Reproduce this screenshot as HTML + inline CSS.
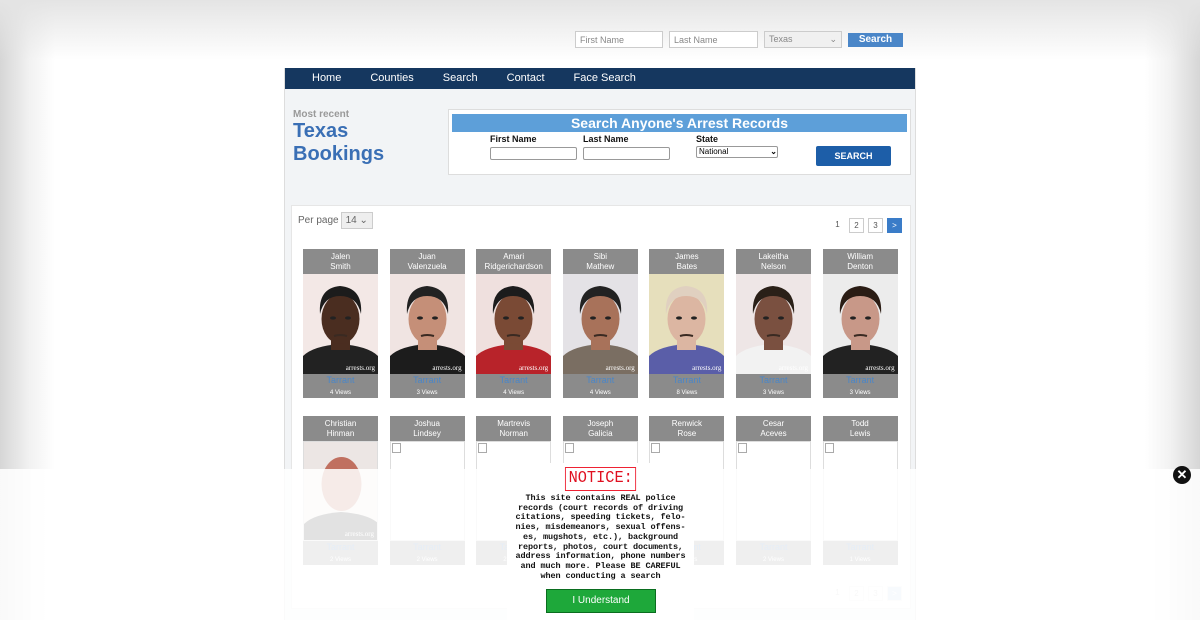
<!DOCTYPE html>
<html><head><meta charset="utf-8"><style>
*{box-sizing:border-box;margin:0;padding:0}
html,body{width:1200px;height:620px;overflow:hidden}
body{position:relative;font-family:"Liberation Sans",Arial,sans-serif;background:linear-gradient(to right,#d6d6d6 0,#f2f2f2 30px,#fff 55px,#fff 1145px,#f2f2f2 1170px,#d6d6d6 1200px)}
.topg{position:absolute;left:0;top:0;width:1200px;height:60px;background:linear-gradient(#e4e4e4,rgba(255,255,255,0))}
.topbar{position:absolute;top:31px;left:575px;display:flex;gap:6px}
.topbar input,.topbar .sel{height:17px;border:1px solid #ccc;background:#fff;font-size:9px;color:#888;padding:2px 4px;font-family:inherit}
.btn1{position:absolute;left:848px;top:33px;width:55px;height:14px;background:#4a86c8;color:#fff;font-size:10px;font-weight:bold;text-align:center;line-height:14px}
.wrap{position:absolute;left:284px;top:68px;width:632px;height:552px;background:#f2f4f6;border-left:1px solid #ddd;border-right:1px solid #ddd}
.nav{height:21px;background:#15375f;display:flex;padding-left:27px}
.nav span{color:#fff;font-size:11px;line-height:21px;margin-right:29px}
.mr{position:absolute;left:8px;top:41px;color:#999;font-size:10px;font-weight:bold}
.tb{position:absolute;left:8px;top:52px;color:#3a6fb5;font-size:20px;font-weight:bold;line-height:23px}
.sbox{position:absolute;left:163px;top:41px;width:463px;height:66px;background:#fff;border:1px solid #ddd}
.sh{position:absolute;left:3px;top:4px;width:455px;height:18px;background:#5d9fd9;color:#fff;font-weight:bold;font-size:14px;text-align:center;line-height:18px}
.lab{position:absolute;top:24px;font-size:9px;font-weight:bold;color:#111}
.inp{position:absolute;top:37px;width:87px;height:13px;border:1px solid #999;border-radius:2px}
.sb{position:absolute;left:367px;top:36px;width:75px;height:20px;background:#1d5ea8;color:#fff;font-size:9px;font-weight:bold;text-align:center;line-height:20px;border-radius:2px}
.res{position:absolute;left:6px;top:137px;width:620px;height:404px;background:#fff;border:1px solid #e6e6e6}
.pp{position:absolute;left:6px;top:6px;font-size:10px;color:#666;line-height:16px}
.pp b{display:inline-block;font-weight:normal;border:1px solid #ccc;background:#eee;padding:0 4px;margin-left:2px;height:17px}
.pg{position:absolute;right:8px;display:flex;gap:4px;font-size:8px;color:#555}
.pg span{width:15px;height:15px;border:1px solid #ccc;text-align:center;line-height:14px}
.card{position:absolute;width:75px;font-size:8px;text-align:center}
.ch{height:25px;background:#8b8b8b;color:#fff;line-height:9.5px;padding-top:3px}
.ci{height:100px;position:relative;overflow:hidden}
.cf{height:24px;background:#8b8b8b;line-height:11px;padding-top:1px}
.cf a{color:#4a86c8;font-size:9px;display:block}
.cf i{font-style:normal;color:#fff;font-size:6px}
.wm{position:absolute;right:3px;bottom:2px;color:#fff;font-size:7px;font-family:"Liberation Serif",serif}
.ov{position:absolute;left:0;top:469px;width:1200px;height:151px;background:rgba(255,255,255,.86)}
.notice{position:absolute;left:507px;top:463px;width:187px;height:157px;background:#fff;text-align:center;font-family:"Liberation Mono",monospace}
.nt{display:inline-block;margin-top:4px;border:1px solid #e23;color:#e01020;font-size:17px;padding:0 3px;line-height:22px;transform:scaleX(.9)}
.np{font-size:8.5px;line-height:9.7px;color:#111;margin-top:3px;font-weight:bold;white-space:nowrap;letter-spacing:-.1px}
.ub{position:absolute;left:39px;top:126px;width:110px;height:24px;background:#1ea83a;border:1px solid #0a6d1f;color:#fff;font-family:"Liberation Sans",sans-serif;font-size:10px;line-height:22px}
.x{position:absolute;left:1173px;top:466px;width:18px;height:18px;border-radius:50%;background:#111;color:#fff;font-weight:bold;font-size:13px;line-height:18px;text-align:center}
</style></head><body>
<div class="topg"></div>
<div class="topbar"><input value="First Name" style="width:88px"><input value="Last Name" style="width:89px"><div class="sel" style="width:78px;background:#f0f0f0">Texas<span style="float:right">⌄</span></div></div>
<div class="btn1">Search</div>
<div class="wrap">
<div class="nav"><span>Home</span><span>Counties</span><span>Search</span><span>Contact</span><span>Face Search</span></div>
<div class="mr">Most recent</div>
<div class="tb">Texas<br>Bookings</div>
<div class="sbox"><div class="sh">Search Anyone's Arrest Records</div>
<div class="lab" style="left:41px">First Name</div><div class="lab" style="left:134px">Last Name</div><div class="lab" style="left:247px">State</div>
<div class="inp" style="left:41px"></div><div class="inp" style="left:134px"></div>
<div class="inp" style="left:247px;top:36px;width:82px;height:12px;font-size:8px;line-height:10px;padding-left:2px">National<span style="float:right;font-weight:bold">⌄</span></div>
<div class="sb">SEARCH</div></div>
<div class="res">
<div class="pp">Per page<b>14 ⌄</b></div>
<div class="pg" style="top:12px"><span style="border:none">1</span><span>2</span><span>3</span><span style="background:#3a7cc8;color:#fff;border-color:#3a7cc8">&gt;</span></div>
<div class="pg" style="top:380px;opacity:.3"><span style="border:none">1</span><span>2</span><span>3</span><span style="background:#3a7cc8;color:#fff">&gt;</span></div>
</div>
</div>
<div id="cards"></div>
<script>
var r1=[["Jalen","Smith","4","#f3e8e6","#4a2d20","#1c1c1c","#222"],["Juan","Valenzuela","3","#f0e4e2","#c58f78","#222","#1c1c1c"],["Amari","Ridgerichardson","4","#efe0de","#7a4a35","#1c1c1c","#b8232a"],["Sibi","Mathew","4","#e4e2e6","#a8725a","#222","#7a6e62"],["James","Bates","8","#e6dfbc","#dcb6a2","#e0d0c0","#5a5ea8"],["Lakeitha","Nelson","3","#eee6e6","#7a5040","#2a2018","#f2f2f2"],["William","Denton","3","#ececec","#c89888","#2a1c14","#222"]];
var r2=[["Christian","Hinman","2"],["Joshua","Lindsey","2"],["Martrevis","Norman","2"],["Joseph","Galicia","2"],["Renwick","Rose","2"],["Cesar","Aceves","2"],["Todd","Lewis","1"]];
var h="";
for(var i=0;i<7;i++){var x=303+i*86.6,c=r1[i];
h+='<div class="card" style="left:'+x+'px;top:249px"><div class="ch">'+c[0]+'<br>'+c[1]+'</div><div class="ci" style="background:'+c[3]+'"><svg width="75" height="100"><path d="M0 100 L0 82 Q10 72 37 70 Q65 72 75 82 L75 100Z" fill="'+c[6]+'"/><rect x="28" y="58" width="19" height="18" fill="'+c[4]+'"/><ellipse cx="37.5" cy="45" rx="19" ry="25" fill="'+c[4]+'"/><path d="M17 40 Q15 14 37 12 Q60 14 58 40 Q54 22 37 22 Q21 22 17 40Z" fill="'+c[5]+'"/><ellipse cx="30" cy="44" rx="3" ry="1.6" fill="#222"/><ellipse cx="45" cy="44" rx="3" ry="1.6" fill="#222"/><path d="M31 62 Q37 60 44 62" stroke="#3a2a22" stroke-width="2" fill="none"/></svg><div class="wm">arrests.org</div></div><div class="cf"><a>Tarrant</a><i>'+c[2]+' Views</i></div></div>';}
for(var i=0;i<7;i++){var x=303+i*86.6,c=r2[i];
h+='<div class="card" style="left:'+x+'px;top:416px"><div class="ch">'+c[0]+'<br>'+c[1]+'</div><div class="ci" style="background:'+(i==0?'#ece6e4':'#fff')+';border:1px solid #ddd">'+(i==0?'<svg width="75" height="100"><path d="M0 100 L0 82 Q10 72 37 70 Q65 72 75 82 L75 100Z" fill="#333"/><ellipse cx="37.5" cy="42" rx="20" ry="27" fill="#c07060"/></svg><div class="wm">arrests.org</div>':'<div style="width:9px;height:10px;border:1px solid #aaa;margin:1px"></div>')+'</div><div class="cf"><a>Tarrant</a><i>'+c[2]+' Views</i></div></div>';}
document.getElementById("cards").innerHTML=h;
</script>
<div class="ov"></div>
<div class="notice"><div class="nt">NOTICE:</div><div class="np">This site contains REAL police<br>records (court records of driving<br>citations, speeding tickets, felo-<br>nies, misdemeanors, sexual offens-<br>es, mugshots, etc.), background<br>reports, photos, court documents,<br>address information, phone numbers<br>and much more. Please BE CAREFUL<br>when conducting a search</div><div class="ub">I Understand</div></div>
<div class="x">✕</div>
</body></html>
